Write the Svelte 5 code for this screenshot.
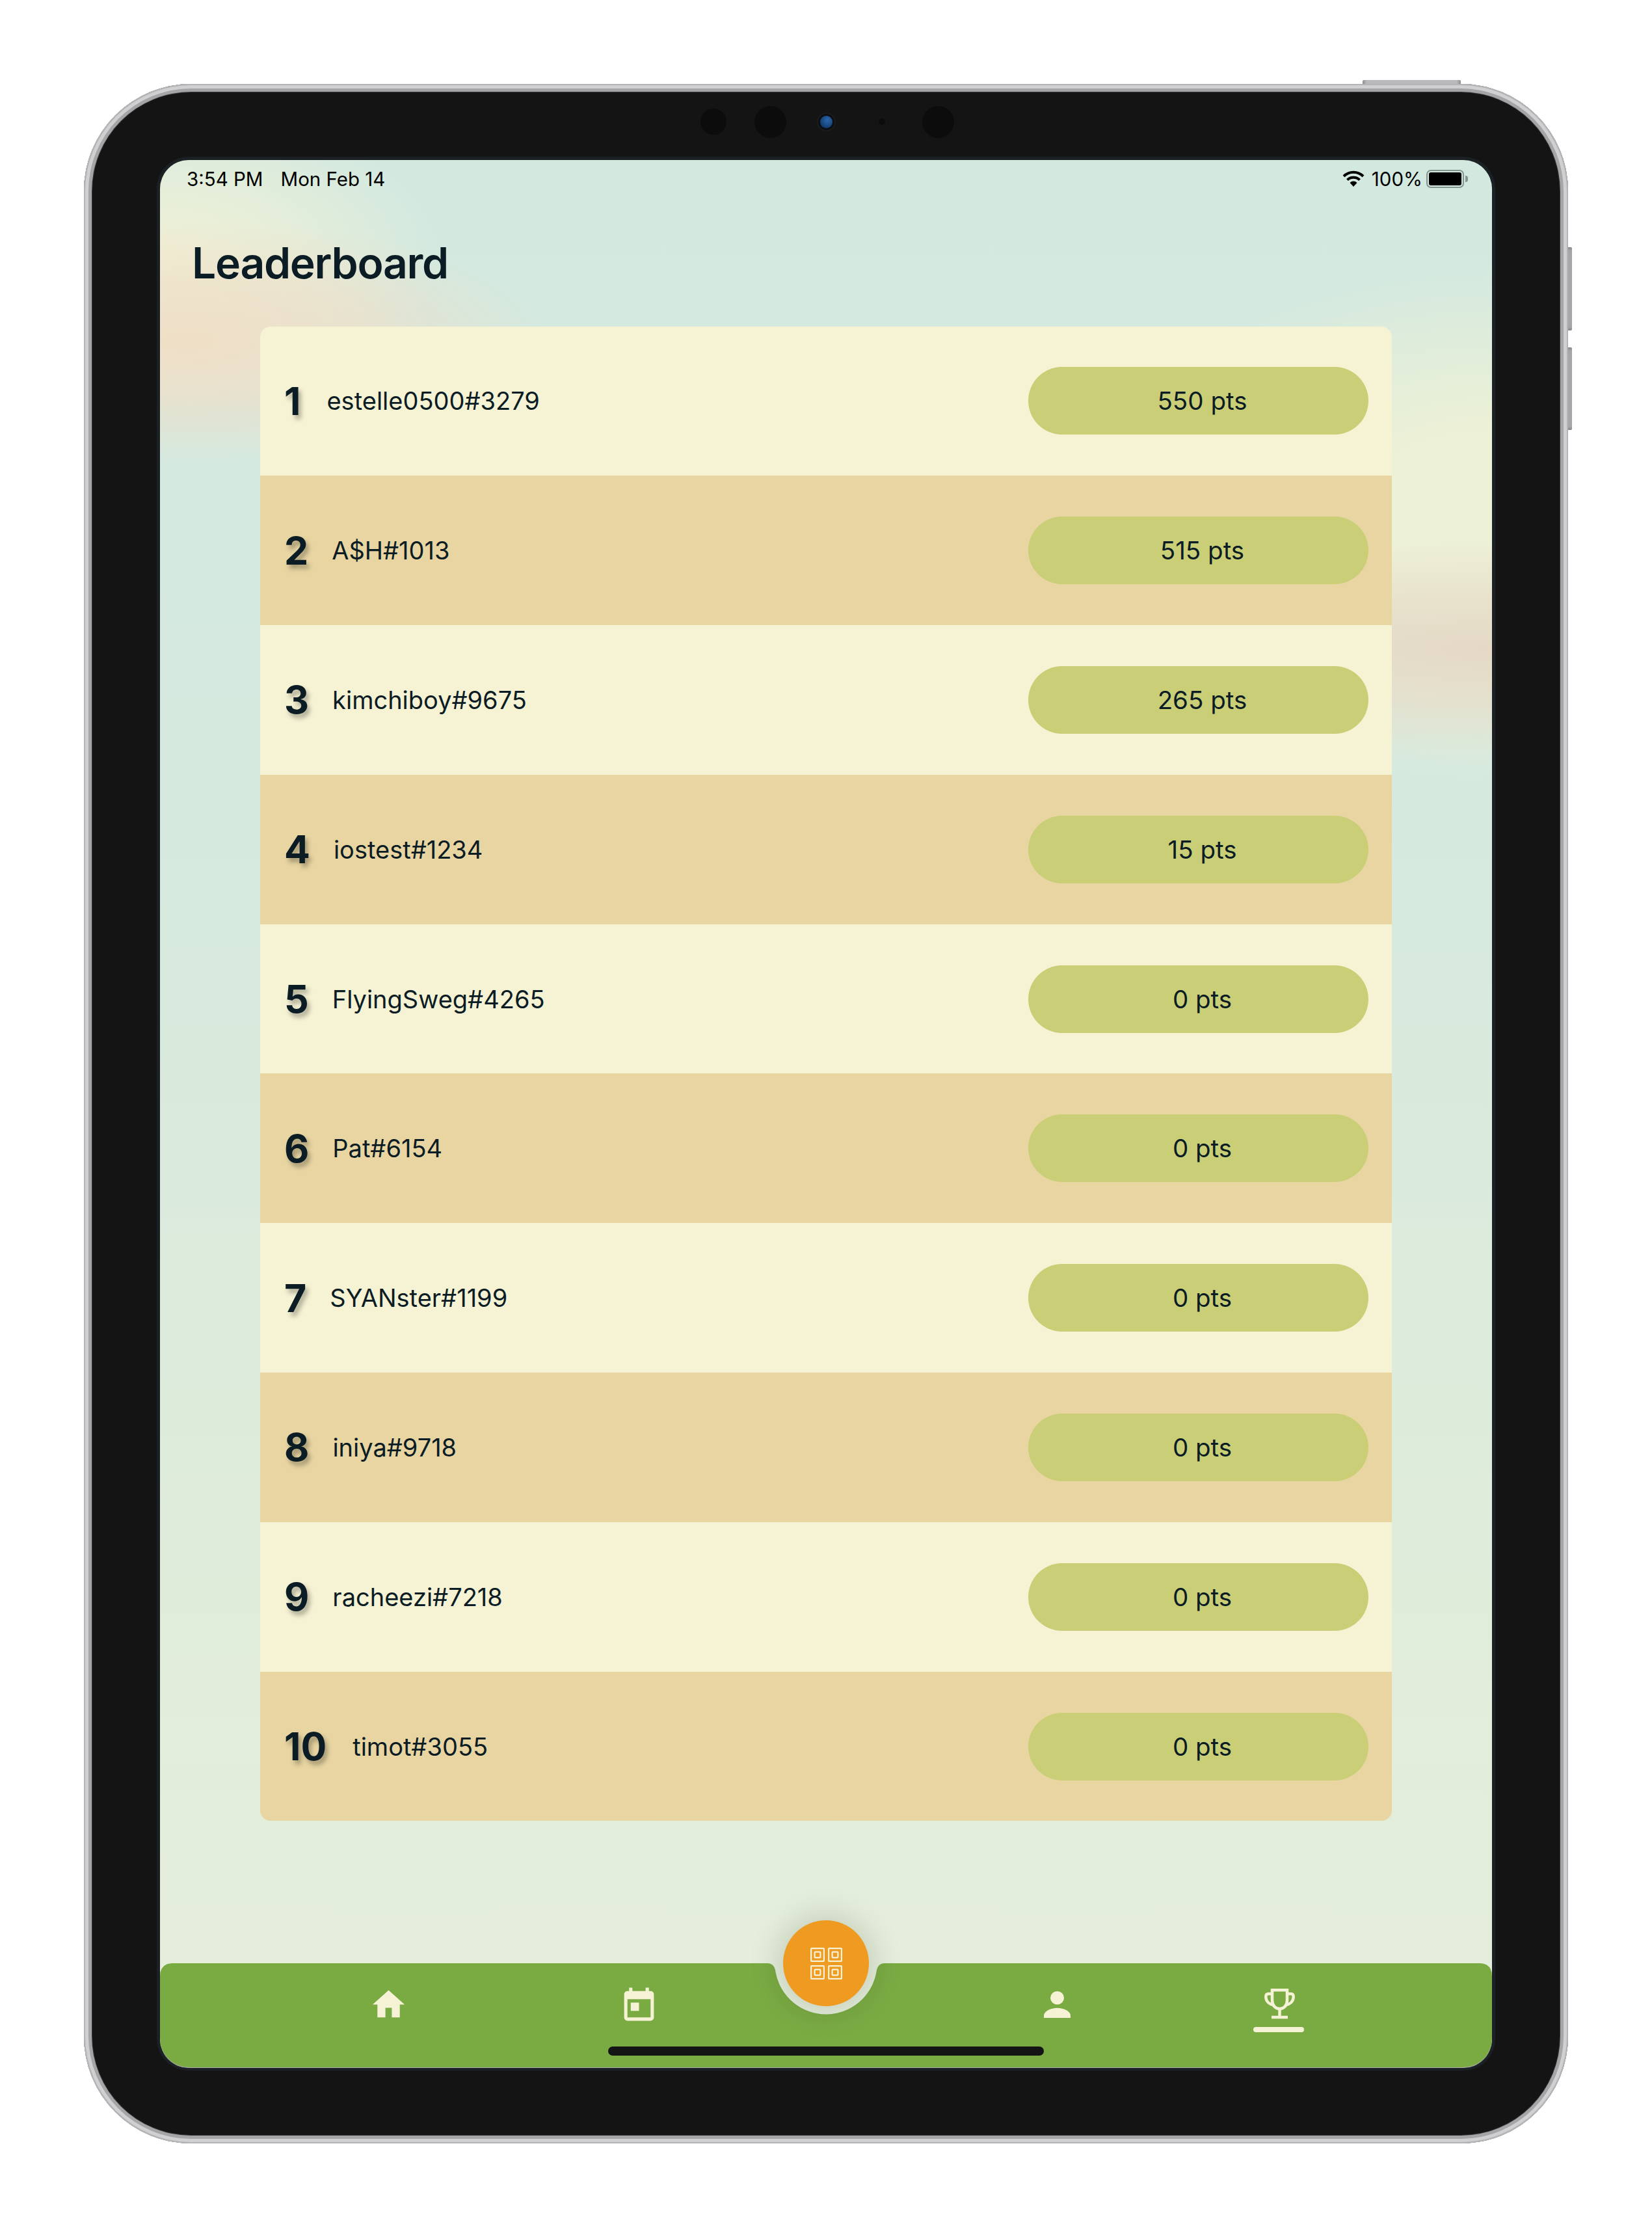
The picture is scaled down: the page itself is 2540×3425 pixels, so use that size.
<script>
  const players = [
    { rank: 1, name: 'estelle0500#3279', pts: 550 },
    { rank: 2, name: 'A$H#1013', pts: 515 },
    { rank: 3, name: 'kimchiboy#9675', pts: 265 },
    { rank: 4, name: 'iostest#1234', pts: 15 },
    { rank: 5, name: 'FlyingSweg#4265', pts: 0 },
    { rank: 6, name: 'Pat#6154', pts: 0 },
    { rank: 7, name: 'SYANster#1199', pts: 0 },
    { rank: 8, name: 'iniya#9718', pts: 0 },
    { rank: 9, name: 'racheezi#7218', pts: 0 },
    { rank: 10, name: 'timot#3055', pts: 0 }
  ];
  const tiles = [[0, 0], [27, 0], [0, 27], [27, 27]];
</script>

<div class="page">
  <div class="device">
    <span class="btn btn-top"></span>
    <span class="btn btn-vol1"></span>
    <span class="btn btn-vol2"></span>

    <div class="sensors">
      <span class="lens l1"></span>
      <span class="lens l2"></span>
      <span class="cam"></span>
      <span class="lens l3"></span>
      <span class="lens l4"></span>
    </div>

    <div class="screen">
      <div class="status">
        <div class="clock"><span>3:54 PM</span><span>Mon Feb 14</span></div>
        <div class="sys">
          <svg class="wifi" viewBox="0 0 34 25" aria-hidden="true">
            <path d="M2 9A21.2 21.2 0 0 1 32 9" />
            <path d="M7.5 14.7A13.5 13.5 0 0 1 26.500 14.700" />
            <path class="wedge" d="M17 25L11.500 19A7.500 7.500 0 0 1 22.500 19Z" />
          </svg>
          <span class="pct">100%</span>
          <span class="battery"><span class="charge"></span></span>
          <span class="nub"></span>
        </div>
      </div>

      <h1>Leaderboard</h1>

      <div class="board">
        {#each players as p}
          <div class="row">
            <span class="rank">{p.rank}</span>
            <span class="name">{p.name}</span>
            <span class="pill">{p.pts} pts</span>
          </div>
        {/each}
      </div>

      <nav class="nav">
        <svg class="nav-bg" viewBox="0 0 2048 160" aria-hidden="true">
          <path d="M20 0H934Q945 0 946.600 14A78.700 78.700 0 0 0 1101.400 14Q1103 0 1114 0H2028Q2048 0 2048 20V116A44 44 0 0 1 2004 160H44A44 44 0 0 1 0 116V20Q0 0 20 0Z" />
        </svg>

        <div class="item home">
          <svg width="59" height="59" viewBox="0 0 24 24"><path d="M10 20v-6h4v6h5v-8h3L12 3 2 12h3v8z" /></svg>
        </div>
        <div class="item cal">
          <svg width="61" height="61" viewBox="0 0 24 24"><path d="M19 3h-1V1h-2v2H8V1H6v2H5c-1.110 0-1.990.9-1.990 2L3 19c0 1.100.89 2 2 2h14c1.100 0 2-.9 2-2V5c0-1.100-.9-2-2-2zm0 16H5V8h14v11zM7 10h5v5H7z" /></svg>
        </div>
        <div class="item user">
          <svg width="41" height="41" viewBox="0 0 41 41">
            <ellipse cx="20.500" cy="10.200" rx="10.500" ry="10.200" />
            <path d="M0 41v-3.500C0 31 10 25.800 20.500 25.800S41 31 41 37.500V41z" />
          </svg>
        </div>
        <div class="item cup">
          <svg class="trophy" width="47" height="47" viewBox="0 0 47 47">
            <path d="M12 2.300H35V18C35 26 30 31 23.500 31S12 26 12 18Z" />
            <path d="M12 8H6C3 8 2 10.500 2.400 14C3 20 8 24 13.500 25" />
            <path d="M35 8H41C44 8 45 10.500 44.600 14C44 20 39 24 33.500 25" />
            <path d="M23.500 31V43M11 44H36" />
          </svg>
          <span class="underline"></span>
        </div>
      </nav>

      <button class="fab" aria-label="Scan">
        <svg width="49" height="49" viewBox="0 0 49 49">
          {#each tiles as [x, y]}
            <rect x={x + 1.1} y={y + 1.1} width="19.800" height="19.800" rx="1" />
            <rect x={x + 6.6} y={y + 6.6} width="8.800" height="8.800" rx="1" />
          {/each}
        </svg>
      </button>

      <span class="home-indicator"></span>
    </div>
  </div>
</div>

<style>
  :global(body) {
    margin: 0;
    background: #fff;
  }

  .page {
    width: 2540px;
    height: 3425px;
    padding: 129px 0 0 129px;
    box-sizing: border-box;
    font-family: Inter, "Liberation Sans", sans-serif;
    color: #0b1c24;
  }

  .device {
    position: relative;
    width: 2282px;
    height: 3166px;
    padding: 117px;
    box-sizing: border-box;
    border-radius: 165px;
    background: #141414;
    box-shadow:
      inset 0 0 0 2px #b4b4b7,
      inset 0 0 0 7px #d0d0d3,
      inset 0 0 0 12px #a5a5a8,
      inset 0 0 0 13px #3a3a3c;
  }

  .btn {
    position: absolute;
    background: linear-gradient(#8d8d90, #b9b9bc 40%, #b9b9bc 70%, #8d8d90);
  }
  .btn-top {
    left: 1966px;
    top: -6px;
    width: 151px;
    height: 6px;
    border-radius: 2px 2px 0 0;
    background: linear-gradient(90deg, #8d8d90, #b9b9bc 4%, #b9b9bc 96%, #8d8d90);
  }
  .btn-vol1, .btn-vol2 {
    left: 2282px;
    width: 6px;
    border-radius: 0 2px 2px 0;
    background: linear-gradient(#858588, #a6a6a9 4%, #a6a6a9 96%, #858588);
  }
  .btn-vol1 { top: 251px; height: 128px; }
  .btn-vol2 { top: 405px; height: 127px; }

  .sensors {
    position: absolute;
    left: 947.7px;
    top: 33px;
    height: 50px;
    display: flex;
    align-items: center;
  }
  .lens {
    display: block;
    flex: none;
    border-radius: 50%;
    background: #0c0c0c;
  }
  .l1 { width: 40px; height: 40px; }
  .l2 { width: 49px; height: 49px; margin-left: 43px; }
  .cam {
    flex: none;
    width: 19px;
    height: 19px;
    margin-left: 52px;
    margin-right: 5px;
    border-radius: 50%;
    background: radial-gradient(circle at 60% 35%, #2a68ab, #123a6e 75%);
    box-shadow: 0 0 0 3px #0c0f14, 0 0 0 5px #1b1b1b;
  }
  .l3 { width: 10px; height: 10px; margin-left: 66px; }
  .l4 { width: 49px; height: 49px; margin-left: 57px; }

  .screen {
    position: relative;
    width: 2048px;
    height: 2932px;
    display: flex;
    flex-direction: column;
    overflow: hidden;
    border-radius: 44px;
    box-shadow: 0 1px 0 #a9aab0, 0 0 0 5px #1b2024;
    background:
      radial-gradient(ellipse 560px 190px at 40px 278px, rgba(240, 222, 198, .97), rgba(240, 222, 198, .62) 50%, rgba(240, 222, 198, 0)),
      radial-gradient(ellipse 430px 230px at 0 150px, rgba(240, 241, 214, 1), rgba(240, 241, 214, .6) 50%, rgba(240, 241, 214, 0)),
      radial-gradient(ellipse 800px 165px at 2048px 752px, rgba(229, 217, 198, 1), rgba(229, 217, 198, .6) 50%, rgba(229, 217, 198, 0)),
      radial-gradient(ellipse 640px 400px at 2048px 560px, rgba(237, 241, 214, 1), rgba(237, 241, 214, 1) 35%, rgba(237, 241, 214, .5) 68%, rgba(237, 241, 214, 0)),
      linear-gradient(180deg, #d3e9e0 0, #d5e9df 30%, #dcebdc 60%, #e3eeda 85%, #e5eeda 100%);
  }

  .status {
    flex: none;
    height: 58px;
    padding: 0 37px 0 41px;
    display: flex;
    align-items: center;
    justify-content: space-between;
    font-size: 29.5px;
    color: #000;
  }
  .clock {
    display: flex;
    gap: 27px;
  }
  .sys {
    display: flex;
    align-items: center;
  }
  .wifi {
    width: 34px;
    height: 25px;
    margin-top: -1px;
  }
  .wifi path {
    fill: none;
    stroke: #000;
    stroke-width: 4;
  }
  .wifi .wedge {
    fill: #000;
    stroke: none;
  }
  .pct {
    margin-left: 11px;
  }
  .battery {
    width: 58px;
    height: 28px;
    margin-left: 6px;
    padding: 2px;
    box-sizing: border-box;
    border: 2px solid #84948e;
    border-radius: 7px;
    display: block;
  }
  .charge {
    display: block;
    height: 100%;
    border-radius: 3px;
    background: #000;
  }
  .nub {
    width: 4px;
    height: 10px;
    margin-left: 2px;
    border-radius: 0 4px 4px 0;
    background: #84948e;
  }

  h1 {
    flex: none;
    margin: 60px 0 57.5px;
    padding-left: 49px;
    font-size: 66px;
    line-height: 80px;
    font-weight: 600;
    letter-spacing: -1.3px;
  }

  .board {
    flex: none;
    width: 1740px;
    margin-left: 154px;
    border-radius: 16px;
    overflow: hidden;
  }
  .row {
    height: 229.8px;
    padding: 0 36px 0 37px;
    display: flex;
    align-items: center;
    background: #f6f2d4;
  }
  .row:nth-child(even) {
    background: #e8d5a2;
  }
  .rank {
    font-size: 59px;
    font-weight: 700;
    text-shadow: 4px 6px 7px rgba(0, 0, 0, .3);
  }
  .name {
    margin-left: 36px;
    font-size: 38px;
  }
  .row:first-child .name,
  .row:last-child .name {
    margin-left: 40px;
  }
  .pill {
    width: 523px;
    height: 104px;
    margin-left: auto;
    padding-left: 12px;
    box-sizing: border-box;
    display: flex;
    align-items: center;
    justify-content: center;
    border-radius: 52px;
    background: #cace77;
    font-size: 38.5px;
  }

  .nav {
    position: relative;
    flex: none;
    height: 160px;
    margin-top: auto;
    padding-left: 311.5px;
    display: flex;
    align-items: flex-start;
  }
  .nav-bg {
    position: absolute;
    left: 0;
    top: 0;
    width: 2048px;
    height: 160px;
  }
  .nav-bg path {
    fill: #7aab43;
  }
  .item {
    position: relative;
    flex: none;
    width: 80px;
    display: flex;
    flex-direction: column;
    align-items: center;
  }
  .item svg {
    display: block;
    fill: #f6f2d6;
  }
  .home { padding-top: 34px; }
  .cal { padding-top: 35px; margin-left: 304.5px; }
  .user { padding-top: 43px; margin-left: 563px; }
  .cup { padding-top: 39px; margin-left: 262.5px; }
  .trophy path {
    fill: none;
    stroke: #f6f2d6;
    stroke-width: 4.500;
  }
  .underline {
    width: 78px;
    height: 8px;
    margin-top: 12px;
    margin-right: 3px;
    border-radius: 4px;
    background: #f6f2d6;
  }

  .fab {
    position: absolute;
    left: 958px;
    top: 2706px;
    width: 132px;
    height: 132px;
    padding: 0;
    border: 0;
    border-radius: 50%;
    background: #ef9b22;
    display: flex;
    align-items: center;
    justify-content: center;
    box-shadow: 0 0 50px 5px rgba(0, 0, 0, .16);
  }
  .fab rect {
    fill: none;
    stroke: #f6f2d6;
    stroke-width: 2.200;
  }

  .home-indicator {
    position: absolute;
    left: 689px;
    top: 2900px;
    width: 670px;
    height: 13.500px;
    border-radius: 7px;
    background: #141414;
  }
</style>
